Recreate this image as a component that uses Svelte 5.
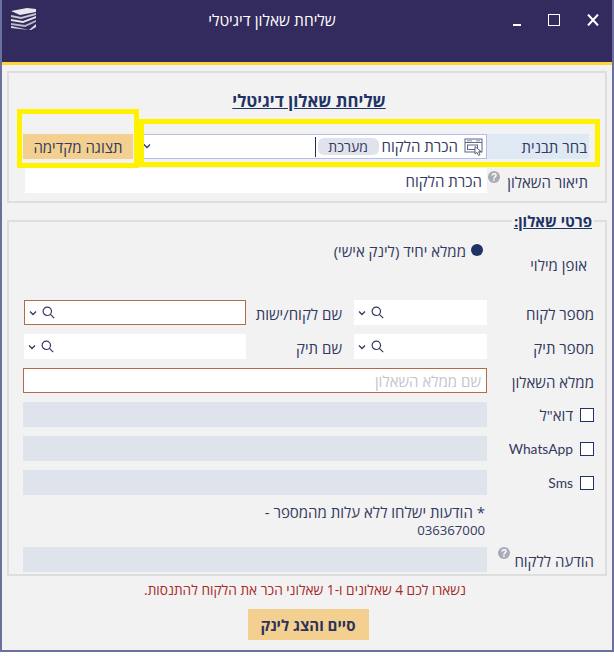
<script>
  const chevron = 'M1 1.5 L4 4.5 L7 1.5';
</script>

{#snippet search()}
  <span class="lookup">
    <svg class="chev" width="8" height="6" viewBox="0 0 8 6"><path d={chevron} /></svg>
    <svg class="mag" width="13" height="13" viewBox="0 0 13 13"><circle cx="5.3" cy="5.3" r="4.2" /><path d="M8.4 8.4 L12.2 12.2" /></svg>
  </span>
{/snippet}

{#snippet help()}
  <svg class="help" width="12" height="12" viewBox="0 0 12 12"><circle cx="6" cy="6" r="6" /><text x="6" y="9.6" text-anchor="middle">?</text></svg>
{/snippet}

<div class="window">
  <header class="titlebar">
    <div class="tools">
      <svg class="x" width="12" height="12" viewBox="0 0 12 12"><path d="M1 .5 L11 11.5 M11 .5 L1 11.5" stroke="#fff" stroke-width="2" /></svg>
      <span class="max"></span>
      <span class="min"></span>
    </div>
    <h1>שליחת שאלון דיגיטלי</h1>
    <svg class="logo" width="25" height="22" viewBox="0 0 25 22">
      <path d="M0 3 L16 0 L25 1 L25 4 L9 7 Z" fill="#e8e8ec" />
      <path d="M0 7 L10 9 L25 5 L25 7 L10 11 L0 9Z" fill="#c9c9d2" />
      <path d="M0 11 L12 13 L25 8 L25 10 L12 15 L0 13Z" fill="#e5e5ea" />
      <path d="M0 15 L14 17 L25 12 L25 14 L14 19 L0 17Z" fill="#b9b9c4" />
      <path d="M0 18 L18 22 L25 16 L25 19 L20 22 L18 22 L0 20Z" fill="#dcdce2" />
    </svg>
  </header>

  <main class="body">
    <section class="box top">
      <h2>שליחת שאלון דיגיטלי</h2>
      <div class="template-row">
        <label class="tpl-label" for="tpl">בחר תבנית</label>
        <div class="select" id="tpl">
          <svg class="tpl-icon" width="19" height="19" viewBox="0 0 19 19">
            <rect x="1" y="2" width="17" height="13" fill="none" stroke="#5b6584" />
            <path d="M1 5.5 H18" stroke="#5b6584" />
            <path d="M3 3.8 H8 M12 3.8 H16" stroke="#8b92a8" />
            <rect x="3.5" y="8" width="10" height="4.5" fill="none" stroke="#5b6584" />
            <path d="M11 9.5 L11 17 L13 15.4 L14.5 18.4 L16 17.6 L14.6 14.8 L17 14.5Z" fill="#fff" stroke="#4e587a" stroke-width=".9" />
          </svg>
          <span class="tpl-name">הכרת הלקוח</span>
          <span class="pill">מערכת</span>
          <span class="caret"></span>
          <svg class="chev end" width="8" height="6" viewBox="0 0 8 6"><path d={chevron} /></svg>
        </div>
        <button class="preview">תצוגה מקדימה</button>
      </div>
      <div class="desc-row">
        <span class="desc-label">תיאור השאלון <span class="desc-help">{@render help()}</span></span>
        <div class="desc">הכרת הלקוח</div>
      </div>
    </section>

    <fieldset class="box details">
      <legend>פרטי שאלון:</legend>
      <div class="mode">
        <span class="mode-label">אופן מילוי</span>
        <span class="radio"><i></i>ממלא יחיד (לינק אישי)</span>
      </div>
      <div class="grid">
        <span class="lbl">מספר לקוח</span>
        <div class="field">{@render search()}</div>
        <span class="lbl mid">שם לקוח/ישות</span>
        <div class="field req">{@render search()}</div>

        <span class="lbl">מספר תיק</span>
        <div class="field">{@render search()}</div>
        <span class="lbl mid">שם תיק</span>
        <div class="field">{@render search()}</div>

        <span class="lbl">ממלא השאלון</span>
        <div class="field req wide ph">שם ממלא השאלון</div>

        <span class="lbl chk"><i></i>דוא"ל</span>
        <div class="field off wide"></div>

        <span class="lbl chk"><i></i><span class="latin">WhatsApp</span></span>
        <div class="field off wide"></div>

        <span class="lbl chk"><i></i><span class="latin">Sms</span></span>
        <div class="field off wide"></div>

        <p class="note">* הודעות ישלחו ללא עלות מהמספר -<br /><span class="digits">036367000</span></p>

        <span class="lbl msg">הודעה ללקוח {@render help()}</span>
        <div class="field off wide"></div>
      </div>
    </fieldset>

    <p class="quota">נשארו לכם 4 שאלונים ו-1 שאלוני הכר את הלקוח להתנסות.</p>
    <button class="finish">סיים והצג לינק</button>
  </main>

  <div class="mark mark-btn"></div>
  <div class="mark mark-sel"></div>
</div>

<style>
  :global(body) {
    margin: 0;
    background: #fff;
  }
  .window {
    position: relative;
    box-sizing: border-box;
    width: 614px;
    height: 652px;
    border-left: 2px solid #6a719e;
    border-right: 2px solid #6a719e;
    border-bottom: 2px solid #6a719e;
    background: #f2f2f2;
    direction: rtl;
    font-family: "Open Sans", "Liberation Sans", sans-serif;
    font-size: 15px;
    color: #33395f;
  }
  .titlebar {
    box-sizing: border-box;
    height: 65px;
    border-bottom: 3px solid #ffd33c;
    background: #332b5e;
    position: relative;
    display: flex;
    justify-content: center;
  }
  .titlebar h1 {
    margin: 9px 70px 0 0;
    font-size: 15.5px;
    line-height: 22px;
    font-weight: 400;
    color: #fff;
  }
  .tools {
    position: absolute;
    top: 14px;
    right: 13px;
    width: 86px;
    display: flex;
    align-items: center;
    justify-content: space-between;
  }
  .tools .x {
    flex: none;
  }
  .tools .max {
    flex: none;
    box-sizing: border-box;
    width: 12px;
    height: 12px;
    border: 1px solid #fff;
  }
  .tools .min {
    flex: none;
    width: 8px;
    height: 2px;
    margin-top: 9px;
    background: #fff;
  }
  .logo {
    position: absolute;
    top: 8px;
    left: 9px;
  }
  .body {
    padding: 6px 5px 0 5px;
  }
  .box {
    box-sizing: border-box;
    margin: 0;
    border: 2px solid #dedede;
    min-width: 0;
  }
  .top {
    height: 132px;
    padding: 0 12px 0 16px;
  }
  h2 {
    margin: 17px 0 0;
    text-align: center;
    font-size: 16.8px;
    line-height: 22px;
    font-weight: 700;
    color: #1f3366;
    text-decoration: underline;
  }
  .template-row {
    display: flex;
    height: 25px;
    margin-top: 22px;
    margin-right: 4px;
  }
  .tpl-label {
    width: 100px;
    padding-right: 2px;
    padding-top: 2px;
    line-height: 23px;
    background: #dee9f3;
    flex: none;
  }
  .select {
    flex: none;
    box-sizing: border-box;
    width: 344px;
    background: #fff;
    border: 1px solid #b4bdec;
    display: flex;
    align-items: center;
    position: relative;
    line-height: 23px;
  }
  .tpl-icon {
    margin-right: 3px;
    margin-left: 6px;
    flex: none;
  }
  .tpl-name { flex: none; }
  .pill {
    flex: none;
    margin-right: 3px;
    width: 61px;
    height: 17px;
    line-height: 17px;
    border-radius: 6px;
    background: #e1e3ec;
    text-align: center;
    font-size: 14px;
  }
  .caret {
    width: 1px;
    height: 20px;
    margin-right: 2px;
    background: #1f2a55;
  }
  .chev {
    fill: none;
    stroke: #33395f;
    stroke-width: 1.3;
  }
  .chev.end {
    position: absolute;
    left: -1px;
    top: 8px;
  }
  .preview {
    margin-right: 10px;
    flex: none;
    width: 110px;
    height: 25px;
    border: 0;
    padding: 0;
    background: #f3d08f;
    font: inherit;
    color: inherit;
  }
  .desc-row {
    display: flex;
    margin-top: 9px;
    margin-right: 4px;
    height: 25px;
  }
  .desc-label {
    box-sizing: border-box;
    width: 102px;
    padding-right: 1px;
    flex: none;
    line-height: 28px;
    white-space: nowrap;
  }
  .desc-help {
    display: inline-block;
    margin-top: 3px;
    margin-right: 3px;
    vertical-align: top;
    line-height: 0;
  }
  .desc {
    width: 464px;
    background: #fff;
    line-height: 26px;
    padding-right: 5px;
    box-sizing: border-box;
  }
  .help {
    flex: none;
    vertical-align: top;
  }
  .help circle { fill: #a9abb5; }
  .help text {
    fill: #fff;
    font-size: 10px;
    font-weight: 700;
    font-family: "Liberation Sans", sans-serif;
  }
  .details {
    height: 365px;
    margin-top: 8px;
    padding: 0 11px 0 14px;
  }
  legend {
    padding: 0 2px;
    font-weight: 700;
    font-size: 15px;
    line-height: 20px;
    color: #1f3366;
    text-decoration: underline;
  }
  .mode {
    display: flex;
    height: 69px;
  }
  .mode-label {
    width: 107px;
    padding-right: 7px;
    box-sizing: border-box;
    flex: none;
    padding-top: 23px;
    line-height: 22px;
  }
  .radio {
    line-height: 22px;
    padding-top: 9px;
    display: flex;
    height: 22px;
  }
  .radio i {
    width: 12px;
    height: 12px;
    margin: 4px 4px 0 5px;
    border-radius: 50%;
    background: #1f3366;
  }
  .grid {
    display: grid;
    grid-template-columns: 107px 133px 108px 222px;
    grid-auto-rows: auto;
    row-gap: 9px;
    justify-content: start;
  }
  .lbl {
    height: 25px;
    line-height: 29px;
    white-space: nowrap;
  }
  .mid {
    padding-right: 12px;
  }
  .field {
    box-sizing: border-box;
    height: 25px;
    background: #fff;
    min-width: 0;
  }
  .wide {
    grid-column: span 3;
    margin-left: -1px;
  }
  .req {
    border: 1px solid #b06a4c;
  }
  .ph {
    color: #c3c5d0;
    padding-right: 5px;
    line-height: 25px;
  }
  .off {
    background: #dfe3ec;
  }
  .chk {
    display: flex;
    align-items: center;
    gap: 7px;
    line-height: 20px;
  }
  .chk i {
    box-sizing: border-box;
    width: 14px;
    height: 14px;
    border: 1px solid #1f3366;
    background: #fff;
    flex: none;
  }
  .latin {
    font-family: Lato, "Open Sans", sans-serif;
    font-size: 13.8px;
  }
  .digits {
    font-size: 13.2px;
  }
  .lookup {
    display: flex;
    direction: ltr;
    align-items: center;
    height: 100%;
    gap: 5px;
    padding-left: 4px;
  }
  .mag {
    fill: none;
    stroke: #33395f;
    stroke-width: 1.2;
  }
  .note {
    grid-column: 2 / span 3;
    margin: 0;
    height: 34px;
    line-height: 17px;
    padding-right: 2px;
  }
  .msg {
    grid-column: 1;
  }
  .quota {
    margin: 3px 0 0;
    padding-right: 4px;
    color: #a52a2a;
    text-align: center;
    font-size: 13.7px;
    line-height: 22px;
  }
  .finish {
    display: block;
    margin: 8px auto 0;
    width: 121px;
    height: 31px;
    border: 0;
    padding: 0;
    background: #f3d08f;
    font: inherit;
    font-weight: 700;
    color: #2c325c;
    position: relative;
    left: 1px;
  }
  .mark {
    position: absolute;
    box-sizing: border-box;
    border: 5px solid #fff200;
    pointer-events: none;
  }
  .mark-btn {
    left: 15px;
    top: 109px;
    width: 122px;
    height: 59px;
  }
  .mark-sel {
    left: 137px;
    top: 119px;
    width: 461px;
    height: 48px;
  }
</style>
